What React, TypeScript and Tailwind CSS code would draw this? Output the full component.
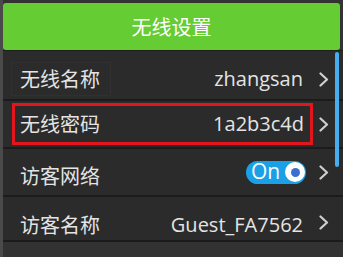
import React from "react";

const Chevron = () => (
  <svg width="12" height="15" viewBox="0 0 12 15" className="shrink-0">
    <polyline points="2.5,1.5 9,7.5 2.5,13.5" fill="none" stroke="#cfcfcf" strokeWidth="2.2" strokeLinecap="round" strokeLinejoin="round" />
  </svg>
);

const font = { fontFamily: '"Open Sans", "Noto Sans CJK SC", sans-serif' };
const cjk = { fontFamily: '"Noto Sans CJK SC", sans-serif' };

export default function App() {
  return (
    <div
      className="relative w-[343px] h-[257px] overflow-hidden bg-[#2c2c2c] border-l-[3px] border-[#4a4a4a] flex flex-col"
      style={font}
    >
      {/* header */}
      <div className="pt-[3px] pr-[3px] bg-[#333333]">
        <div className="h-[47px] rounded-[3px] bg-[#66cc33] flex items-center justify-center text-white text-[20px] leading-none" style={cjk}>
          无线设置
        </div>
      </div>
      <div className="h-[1px] bg-[#1e1e1e]" />

      {/* row 1 */}
      <div className="h-[50px] pt-[8px] border-b-2 border-[#1b1b1b] flex items-center pl-[9px] bg-[#2b2b2b]">
        <div className="w-[301px] h-[34px] flex items-center pl-[8px] pr-[10px] text-[#e4e4e4] text-[20px]">
          <span className="border border-[#303030] -ml-[9px] pl-[8px] pr-[10px] h-[34px] flex items-center" style={cjk}>无线名称</span>
          <span className="ml-auto">zhangsan</span>
        </div>
        <div className="ml-[5px]"><Chevron /></div>
      </div>

      {/* row 2 */}
      <div className="h-[48px] border-b-2 border-[#1b1b1b] flex items-center pl-[9px] bg-[#2b2b2b]">
        <div className="w-[301px] h-[42px] border-[3px] border-[#e3161d] flex items-center pl-[5px] pr-[6px] text-[#e4e4e4] text-[20px]">
          <span style={cjk}>无线密码</span>
          <span className="ml-auto">1a2b3c4d</span>
        </div>
        <div className="ml-[5px]"><Chevron /></div>
      </div>

      {/* row 3 */}
      <div className="h-[48px] border-b-2 border-[#1b1b1b] flex items-center pl-[9px] bg-[#2b2b2b]">
        <div className="w-[301px] flex items-center pl-[8px] pr-[7px] text-[#e4e4e4] text-[20px]">
          <span className="mt-[8px]" style={cjk}>访客网络</span>
          <div className="ml-auto w-[60px] h-[23px] rounded-full bg-[#19a0e6] flex items-center pl-[5px] pr-[1px]">
            <span className="text-white text-[21px] leading-none -mt-[1px]">On</span>
            <div className="ml-auto w-[20px] h-[20px] rounded-full bg-white flex items-center justify-center">
              <div className="w-[9px] h-[9px] rounded-full bg-[#3b6fcf]" />
            </div>
          </div>
        </div>
        <div className="ml-[5px]"><Chevron /></div>
      </div>

      {/* row 4 */}
      <div className="h-[45px] pt-[12px] border-b-2 border-[#1b1b1b] flex items-center pl-[9px] bg-[#2b2b2b]">
        <div className="w-[301px] flex items-center pl-[8px] pr-[10px] text-[#e4e4e4] text-[20px]">
          <span style={cjk}>访客名称</span>
          <span className="ml-auto">Guest_FA7562</span>
        </div>
        <div className="ml-[5px] -mt-[5px]"><Chevron /></div>
      </div>

      <div className="flex-1 bg-[#323232]" />

      {/* scrollbar */}
      <div className="absolute left-[332px] top-[52px] w-[4px] h-[115px] rounded-full bg-[#45aef0]" />
    </div>
  );
}
